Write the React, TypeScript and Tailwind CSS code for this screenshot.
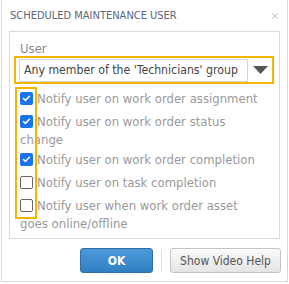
import { Check, X } from 'lucide-react'

const font = { fontFamily: '"DejaVu Sans Condensed", "DejaVu Sans", sans-serif' }

function Box({ checked }: { checked: boolean }) {
  if (checked) {
    return (
      <span className="inline-flex w-[13px] h-[13px] rounded-[2px] bg-[#1a73e8] items-center justify-center mr-[4px] shrink-0">
        <Check className="w-[9px] h-[9px] text-white" strokeWidth={4} />
      </span>
    )
  }
  return <span className="inline-block w-[13px] h-[13px] rounded-[2px] border border-[#666] bg-white mr-[4px] shrink-0" />
}

const rows = [
  { lines: ['Notify user on work order assignment'], checked: true },
  { lines: ['Notify user on work order status', 'change'], checked: true },
  { lines: ['Notify user on work order completion'], checked: true },
  { lines: ['Notify user on task completion'], checked: false },
  { lines: ['Notify user when work order asset', 'goes online/offline'], checked: false },
]

export default function App() {
  return (
    <div className="w-[289px] h-[284px] bg-white" style={font}>
      <div className="ml-[1px] w-[287px] h-[282px] border-x border-b border-[#d9d9d9] flex flex-col">
        <div className="flex items-center justify-between pl-[8px] pr-[7px] h-[31px] pt-[1px]">
          <span className="text-[11px] text-[#5c6478]">SCHEDULED MAINTENANCE USER</span>
          <X className="w-[10px] h-[10px] text-[#999]" strokeWidth={1.5} />
        </div>
        <div className="mx-[7px] h-[208px] border border-[#d9d9d9] relative">
          <div className="pl-[10px] pt-[9px] h-[24px] text-[13px] text-[#8a8a8a] leading-[15px]">User</div>
          <div className="ml-[4px] mr-[5px] h-[28px] border-2 border-[#f5b400] flex items-center pl-[3px]">
            <div className="w-[229px] h-[23px] border border-[#d6d6d6] flex items-center pl-[4px] text-[12.2px] text-[#444] whitespace-nowrap overflow-hidden">
              Any member of the 'Technicians' group
            </div>
            <div className="flex-1 flex items-center justify-center">
              <svg width="15" height="8" viewBox="0 0 15 8">
                <path d="M0 0 H15 L7.5 8 Z" fill="#555" />
              </svg>
            </div>
          </div>
          <div className="absolute left-[5px] top-[55px] w-[22px] h-[132px] border-2 border-[#f5b400] pointer-events-none" />
          <div className="pl-[10px] pt-[3px] text-[13px] text-[#9a9a9a]">
            {rows.map((r, i) => (
              <div key={i}>
                <div className="h-[23px] flex items-center whitespace-nowrap">
                  <Box checked={r.checked} />
                  <span>{r.lines[0]}</span>
                </div>
                {r.lines[1] && (
                  <div className="h-[15px] -mt-[1px] mb-[1px] flex items-center leading-[15px] whitespace-nowrap">{r.lines[1]}</div>
                )}
              </div>
            ))}
          </div>
        </div>
        <div className="flex items-center justify-end pr-[6px] mt-[9px] gap-[8px]">
          <button className="w-[73px] h-[25px] rounded-[3px] border border-[#2f6fa8] bg-gradient-to-b from-[#4c9ad8] to-[#2f7fc3] text-white text-[12px] font-bold">
            OK
          </button>
          <div className="w-[1px] h-[23px] bg-[#ddd]" />
          <button className="w-[111px] h-[25px] rounded-[3px] border border-[#c4c4c4] bg-gradient-to-b from-[#fafafa] to-[#e4e4e4] text-[#555] text-[12px]">
            Show Video Help
          </button>
        </div>
      </div>
    </div>
  )
}
